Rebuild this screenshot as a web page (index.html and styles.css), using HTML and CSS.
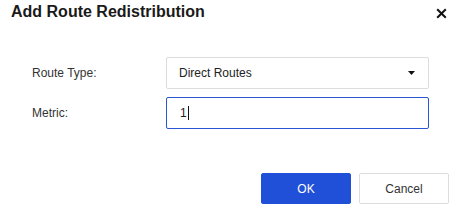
FILE: index.html
```html
<!DOCTYPE html>
<html>
<head>
<meta charset="utf-8">
<link rel="stylesheet" href="styles.css">
</head>
<body>
<div class="dialog">
  <div class="header">
    <div class="title">Add Route Redistribution</div>
    <div class="close">
      <svg width="11" height="11" viewBox="0 0 11 11"><path d="M1.2 1.2 L9.8 9.8 M9.8 1.2 L1.2 9.8" stroke="#111" stroke-width="2" fill="none"/></svg>
    </div>
  </div>
  <div class="form">
    <div class="row">
      <div class="label">Route Type:</div>
      <div class="control select">
        <span>Direct Routes</span>
        <svg class="caret" width="7" height="4" viewBox="0 0 7 4"><path d="M0 0 H7 L3.5 4 Z" fill="#111"/></svg>
      </div>
    </div>
    <div class="row">
      <div class="label">Metric:</div>
      <div class="control input"><span>1</span><span class="cursor"></span></div>
    </div>
  </div>
  <div class="footer">
    <button class="btn primary">OK</button>
    <button class="btn">Cancel</button>
  </div>
</div>
</body>
</html>
```
FILE: styles.css
```css
html, body {
  margin: 0;
  padding: 0;
  background: #fff;
}
body {
  font-family: "Liberation Sans", Arial, sans-serif;
  color: #333;
}
.dialog {
  width: 462px;
  height: 210px;
  display: flex;
  flex-direction: column;
}
.header {
  display: flex;
  justify-content: space-between;
  align-items: center;
  padding: 2px 15px 0 11px;
  height: 20px;
}
.title {
  font-size: 16px;
  font-weight: bold;
  line-height: 20px;
  color: #1a1a1a;
}
.close {
  display: flex;
  margin-top: 2px;
}
.form {
  display: flex;
  flex-direction: column;
  gap: 8px;
  margin-top: 35px;
  padding-left: 32px;
}
.row {
  display: flex;
  align-items: center;
}
.label {
  width: 134px;
  font-size: 12px;
  color: #333;
}
.control {
  box-sizing: border-box;
  width: 263px;
  height: 32px;
  border: 1px solid #dcdcdc;
  border-radius: 2px;
  display: flex;
  align-items: center;
  padding: 0 12px;
  font-size: 12px;
  color: #222;
}
.select {
  justify-content: space-between;
}
.caret {
  margin-right: 1px;
}
.input {
  border-color: #2a55d4;
  padding-left: 13px;
}
.cursor {
  display: inline-block;
  width: 1px;
  height: 14px;
  background: #111;
  margin-left: 1px;
}
.footer {
  display: flex;
  justify-content: flex-end;
  gap: 8px;
  margin-top: 44px;
  padding-right: 13px;
}
.btn {
  box-sizing: border-box;
  width: 90px;
  height: 31px;
  border: 1px solid #dcdcdc;
  border-radius: 2px;
  background: #fff;
  font-family: "Liberation Sans", Arial, sans-serif;
  font-size: 12px;
  color: #333;
  padding: 0;
}
.btn.primary {
  background: #2150d8;
  border-color: #2150d8;
  color: #fff;
}
```
